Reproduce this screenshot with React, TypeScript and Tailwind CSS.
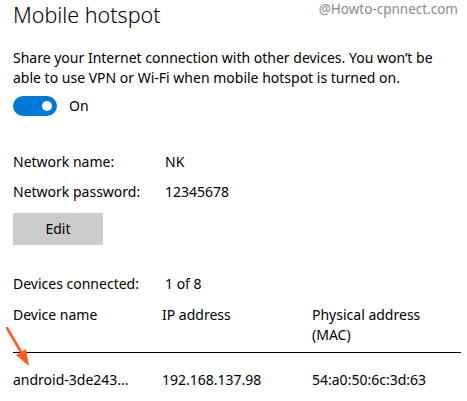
export default function App() {
  return (
    <div
      className="relative w-[467px] h-[401px] overflow-hidden bg-white text-[#000000] px-[13px] text-[14px] leading-[20px]"
      style={{ fontFamily: "'Noto Sans', 'Open Sans', sans-serif" }}
    >
      {/* watermark */}
      <div className="absolute right-[9px] top-0 text-[13.5px] leading-[18px] text-[#8a8a8a]">@Howto-cpnnect.com</div>

      <h1 className="text-[21.5px] font-light leading-[29px]">Mobile hotspot</h1>

      <p className="mt-[19px] w-[440px]">
        Share your Internet connection with other devices. You won’t be able to use VPN or Wi-Fi when mobile hotspot is
        turned on.
      </p>

      <div className="mt-[8px] flex items-center gap-[12px]">
        <div className="w-[44px] h-[20px] rounded-full bg-[#0078d7] flex items-center justify-end pr-[5px]">
          <div className="w-[10px] h-[10px] rounded-full bg-white" />
        </div>
        <span>On</span>
      </div>

      <div className="mt-[36px] flex flex-col gap-[10px]">
        <div className="flex">
          <span className="w-[152px]">Network name:</span>
          <span>NK</span>
        </div>
        <div className="flex">
          <span className="w-[152px]">Network password:</span>
          <span>12345678</span>
        </div>
      </div>

      <button className="mt-[11px] w-[90px] h-[32px] bg-[#cccccc] block">Edit</button>

      <div className="mt-[29px] flex">
        <span className="w-[152px]">Devices connected:</span>
        <span>1 of 8</span>
      </div>

      <div className="mt-[11px] mr-[-7px] flex border-b border-black pb-[7px]">
        <span className="w-[149px]">Device name</span>
        <span className="w-[150px]">IP address</span>
        <span>
          Physical address
          <br />
          (MAC)
        </span>
      </div>

      <div className="mt-[17px] flex">
        <span className="w-[149px]">android-3de243...</span>
        <span className="w-[150px]">192.168.137.98</span>
        <span>54:a0:50:6c:3d:63</span>
      </div>

      {/* annotation arrow */}
      <svg className="absolute left-0 top-[320px]" width="40" height="50" viewBox="0 0 40 50">
        <line x1="7" y1="8" x2="21" y2="32" stroke="#ff5a1f" strokeWidth="2.5" strokeLinecap="round" />
        <polygon points="29,46 26,29 16,35" fill="#ff5a1f" />
      </svg>
    </div>
  );
}
